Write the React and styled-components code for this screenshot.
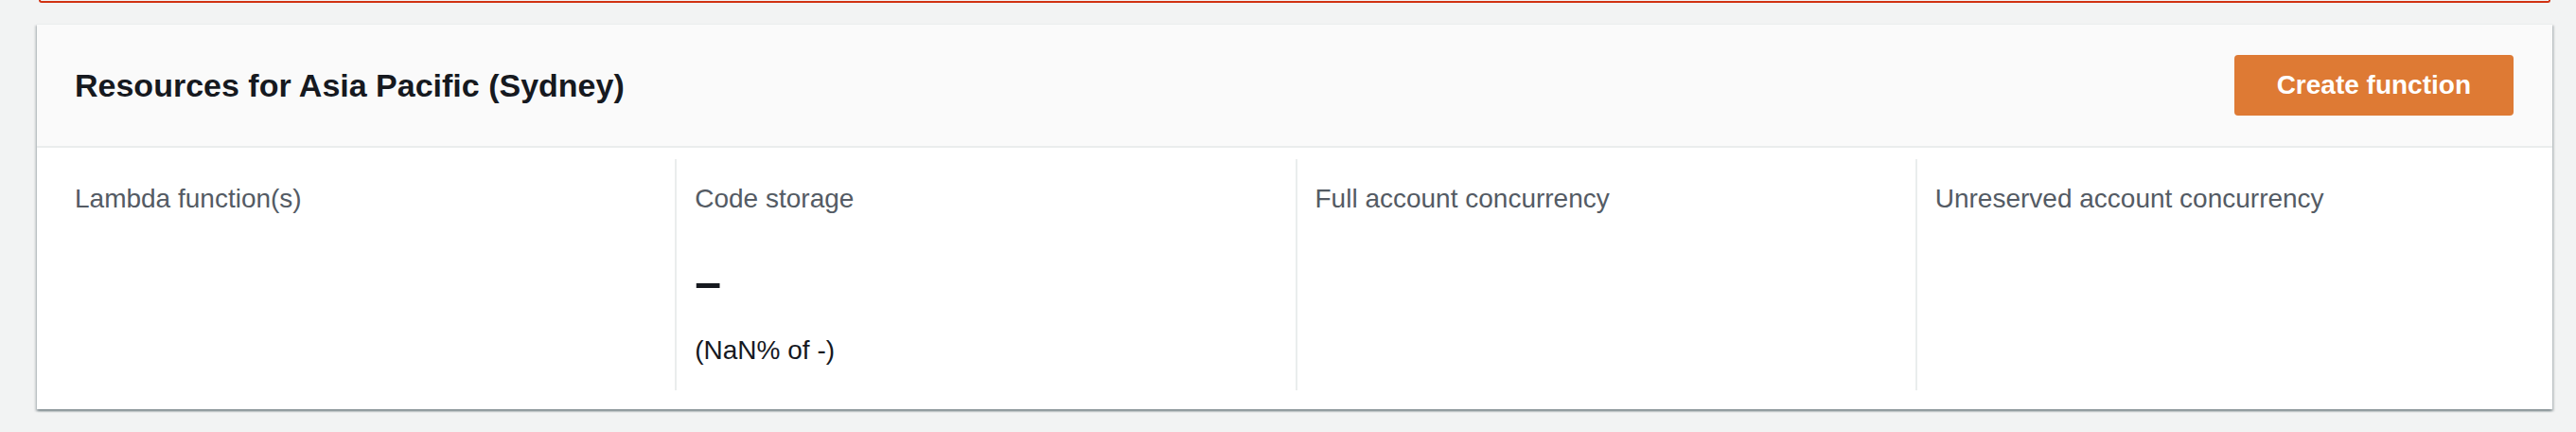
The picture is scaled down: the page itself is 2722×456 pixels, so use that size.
import React from "react";
import styled, { createGlobalStyle } from "styled-components";

const GlobalStyle = createGlobalStyle`
  body {
    margin: 0;
    background: #f2f3f3;
    font-family: "Liberation Sans", Arial, sans-serif;
    color: #16191f;
  }
`;

const Page = styled.div`
  padding: 0 25px 0 39px;
  height: 456px;
  box-sizing: border-box;
`;

const Alert = styled.div`
  height: 1px;
  margin: 0 2px;
  border: 2px solid #d13212;
  border-top: none;
  border-radius: 0 0 5px 5px;
`;

const Card = styled.div`
  margin-top: 22px;
  background: #ffffff;
  box-shadow: 0 2px 2px 0 rgba(0, 28, 36, 0.3), 2px 2px 2px 0 rgba(0, 28, 36, 0.15),
    -2px 2px 2px 0 rgba(0, 28, 36, 0.15);
  border-top: 1px solid #eaeded;
`;

const Header = styled.div`
  height: 128px;
  display: flex;
  align-items: center;
  justify-content: space-between;
  padding: 0 41px 0 40px;
  background: #fafafa;
  border-bottom: 2px solid #eaeded;
`;

const Title = styled.h2`
  margin: 0;
  font-size: 34px;
  font-weight: 700;
  line-height: 48px;
  color: #16191f;
`;

const PrimaryButton = styled.button`
  height: 64px;
  padding: 0 45px;
  border: none;
  border-radius: 4px;
  background: #de7a34;
  color: #ffffff;
  font-family: inherit;
  font-size: 28px;
  font-weight: 700;
  cursor: pointer;
`;

const Body = styled.div`
  display: grid;
  grid-template-columns: repeat(4, 1fr);
  padding: 12px 18px 20px 19px;
`;

const Column = styled.div`
  padding: 22px 0 22px 19px;
  border-left: 2px solid ${(p) => (p.$first ? "transparent" : "#eaeded")};
  min-height: 200px;
`;

const Label = styled.div`
  font-size: 28px;
  line-height: 40px;
  color: #545b64;
`;

const Value = styled.div`
  margin-top: 40px;
  font-size: 50px;
  font-weight: 700;
  line-height: 56px;
  color: #16191f;
`;

const SubValue = styled.div`
  margin-top: 24px;
  font-size: 28px;
  line-height: 40px;
  color: #16191f;
`;

const columns = [
  { label: "Lambda function(s)" },
  { label: "Code storage", value: "–", sub: "(NaN% of -)" },
  { label: "Full account concurrency" },
  { label: "Unreserved account concurrency" },
];

export default function App() {
  return (
    <>
      <GlobalStyle />
      <Page>
        <Alert />
        <Card>
          <Header>
            <Title>Resources for Asia Pacific (Sydney)</Title>
            <PrimaryButton>Create function</PrimaryButton>
          </Header>
          <Body>
            {columns.map((c, i) => (
              <Column key={c.label} $first={i === 0}>
                <Label>{c.label}</Label>
                {c.value && <Value>{c.value}</Value>}
                {c.sub && <SubValue>{c.sub}</SubValue>}
              </Column>
            ))}
          </Body>
        </Card>
      </Page>
    </>
  );
}
